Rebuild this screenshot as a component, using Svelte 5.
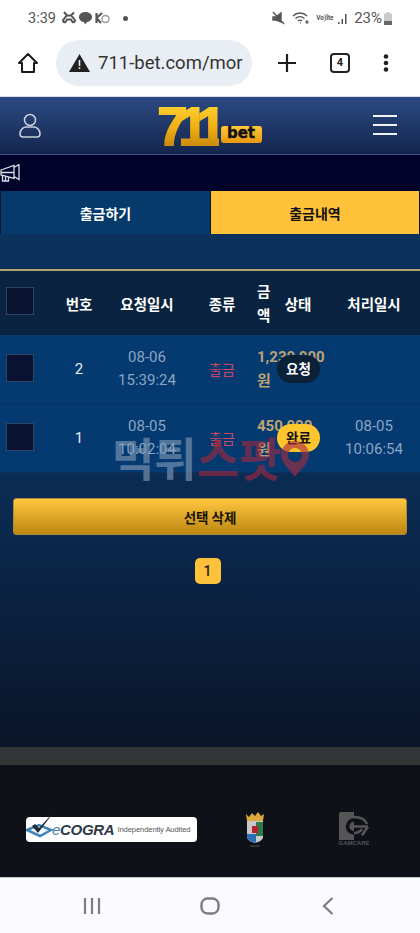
<script>
  const rows = [
    { no: 2, date: "08-06", time: "15:39:24", amount: "1,230,000", status: "요청", done: false, doneDate: "", doneTime: "" },
    { no: 1, date: "08-05", time: "10:02:04", amount: "450,000", status: "완료", done: true, doneDate: "08-05", doneTime: "10:06:54" }
  ]
</script>

<div class="phone">
  <div class="status">
    <span class="clock">3:39</span>
    <svg class="s-ic" width="14" height="14" viewBox="0 0 14 14"><path d="M2 1l3 3.500h4L12 1.500M5 4.500C3 6 2 8 1 9.500c0 1 1 2 2.500 1.500L5 8.500h4l1.500 2.500c1.500.5 2.500-.5 2.500-1.500-1-1.500-2-3.500-4-5" fill="none" stroke="#555" stroke-width="2"/></svg>
    <svg class="s-ic" width="15" height="14" viewBox="0 0 15 14"><path d="M7.500 1C3.600 1 1 3.200 1 6s2.400 5 5 5l1 2.500L9 11c3-.4 5-2.400 5-5S11.400 1 7.500 1z" fill="#555"/></svg>
    <svg class="s-ic" width="15" height="14" viewBox="0 0 15 14"><path d="M1.500 2v10M1.500 7L7 2M1.500 7L6 12" fill="none" stroke="#555" stroke-width="2.200"/><circle cx="10.500" cy="8" r="3.500" fill="none" stroke="#999" stroke-width="1.400"/></svg>
    <span class="dot"></span>
    <span class="grow"></span>
    <svg class="s-ic" width="13" height="14" viewBox="0 0 13 14"><path d="M1 6h3l5-4v9L4 9H1zM1 1l11 12" fill="#555" stroke="#555" stroke-width="1.400"/></svg>
    <svg class="wifi" width="18" height="14" viewBox="0 0 18 14"><path d="M1 5c4-4 10-4 14 0M3.500 7.500c2.500-2.500 6.500-2.500 9 0M6 10c1-1 3-1 4 0" fill="none" stroke="#555" stroke-width="1.300"/><path d="M8 12h1M13 11h4M15 9v4" stroke="#555" stroke-width="1.200"/></svg>
    <span class="lte">Vo)lte</span>
    <svg class="signal" width="12" height="12" viewBox="0 0 12 12"><path d="M1 10h1.500v2H1zM4.500 7H6v5H4.500zM8 2h1.500v10H8z" fill="#555"/></svg>
    <span class="batt-text">23%</span>
    <svg width="8" height="13" viewBox="0 0 8 13"><path d="M2.500 0h3v1.500H8V13H0V1.500h2.500z" fill="#c9c9c9"/><path d="M0 9h8v4H0z" fill="#666"/></svg>
  </div>

  <div class="chrome">
    <svg class="home" width="22" height="22" viewBox="0 0 22 22"><path d="M11 2L2 11h3v9h12v-9h3z" fill="none" stroke="#1c1c1c" stroke-width="2" stroke-linejoin="round"/></svg>
    <div class="url">
      <svg width="21" height="18" viewBox="0 0 21 18"><path d="M10.500 0L21 18H0z" fill="#222"/><path d="M9.700 6h1.600v6H9.700zM9.700 13.200h1.600v1.800H9.700z" fill="#e8eef4"/></svg>
      <span class="url-text">711-bet.com/mor</span>
    </div>
    <svg class="plus" width="20" height="20" viewBox="0 0 20 20"><path d="M10 1v18M1 10h18" stroke="#1c1c1c" stroke-width="2.200"/></svg>
    <div class="tabs-count">4</div>
    <svg class="more" width="6" height="18" viewBox="0 0 6 18"><circle cx="3" cy="2.500" r="2.300" fill="#222"/><circle cx="3" cy="9" r="2.300" fill="#222"/><circle cx="3" cy="15.500" r="2.300" fill="#222"/></svg>
  </div>

  <header class="top">
    <svg width="22" height="25" viewBox="0 0 22 25"><circle cx="11" cy="7" r="5.500" fill="none" stroke="#c8d0dc" stroke-width="1.500"/><path d="M1 21c0-5 4-7 6-7h8c2 0 6 2 6 7 0 2-1 3-3 3H4c-2 0-3-1-3-3z" fill="none" stroke="#c8d0dc" stroke-width="1.500"/></svg>
    <div class="logo">
      <span class="digits">711</span>
      <span class="bet">bet</span>
    </div>
    <div class="burger"><i></i><i></i><i></i></div>
  </header>

  <div class="notice">
    <svg width="21" height="18" viewBox="0 0 21 18"><path d="M1 6l13-4.500v13L1 11zM14 3.500l5-3v15l-5-3M2.500 11v6h6v-4.500M5.500 11.500V17M1 8.500h13" fill="none" stroke="#d8dce4" stroke-width="1.300"/></svg>
  </div>

  <main class="content">
    <div class="tabs">
      <div class="tab">출금하기</div>
      <div class="tab on">출금내역</div>
    </div>

    <div class="list">
      <div class="line head">
        <div class="cell"><span class="box"></span></div>
        <div class="cell">번호</div>
        <div class="cell">요청일시</div>
        <div class="cell">종류</div>
        <div class="cell amount-head">금액</div>
        <div class="cell">상태</div>
        <div class="cell last">처리일시</div>
      </div>
      {#each rows as r}
        <div class="line row">
          <div class="cell"><span class="box"></span></div>
          <div class="cell no">{r.no}</div>
          <div class="cell muted">{r.date}<br />{r.time}</div>
          <div class="cell red">출금</div>
          <div class="cell amount">{r.amount} 원</div>
          <div class="cell"><span class="badge" class:done={r.done}>{r.status}</span></div>
          <div class="cell muted last">{r.doneDate}<br />{r.doneTime}</div>
        </div>
      {/each}
    </div>

    <button class="del">선택 삭제</button>
    <div class="pager"><span class="page">1</span></div>

    <div class="mark">
      <span class="m1">먹튀</span><span class="m2">스팟</span>
      <svg width="28" height="36" viewBox="0 0 28 36"><path fill-rule="evenodd" d="M14 0a14 14 0 0 1 14 14c0 8-9 15-14 22C9 29 0 22 0 14A14 14 0 0 1 14 0zm0 7a7 7 0 1 0 0 14 7 7 0 0 0 0-14z" fill="#a82c40" opacity=".62"/></svg>
    </div>
  </main>

  <div class="greybar"></div>

  <footer class="foot">
    <div class="ecogra">
      <svg width="30" height="28" viewBox="0 0 30 28"><path d="M1 19l12-5 12 5-11 6z" fill="none" stroke="#3f86b8" stroke-width="2.500"/><path d="M6 15l6 7L28 1l-15 16-4-4z" fill="#1e2c3c"/></svg>
      <span class="eco"><b>e</b>COGRA</span>
      <span class="audit">Independently Audited</span>
    </div>
    <svg class="crest" width="20" height="36" viewBox="0 0 20 36"><path d="M1 3l3 3 3-4 3 3 3-4 3 4 3-2-1 7H2z" fill="#d9a93a"/><path d="M2 10h16v16c0 3-4 5-8 6-4-1-8-3-8-6z" fill="#c8c8c8"/><path d="M11 11h7v14h-7z" fill="#2f7a46"/><path d="M2 23h9v9c-4-1-9-3-9-6z" fill="#2b6cb5"/><path d="M7 15h6v7H7z" fill="#b5232a"/><path d="M5 35h10" stroke="#555"/></svg>
    <div class="gamcare">
      <svg width="32" height="28" viewBox="0 0 32 28"><path d="M1 2q0-2 2-2h13v28H1z" fill="#555"/><path d="M16 8a6.500 6.500 0 0 0 0 13" fill="none" stroke="#0e1118" stroke-width="3.500"/><path d="M16 5c6 0 11 2 13 7M14 14.500h16M30 14.500l-6 9M16 21c3 0 6-1 8-4" fill="none" stroke="#555" stroke-width="2.600"/></svg>
      <span class="gc">GAMCARE</span>
    </div>
  </footer>

  <nav class="sysnav">
    <svg width="18" height="18" viewBox="0 0 18 18"><path d="M2 1v16M9 1v16M16 1v16" stroke="#7d7d7f" stroke-width="2.200"/></svg>
    <svg width="20" height="18" viewBox="0 0 20 18"><rect x="1.500" y="1.500" width="17" height="15" rx="6" fill="none" stroke="#7d7d7f" stroke-width="2.400"/></svg>
    <svg width="12" height="18" viewBox="0 0 12 18"><path d="M10.500 1L2 9l8.500 8" fill="none" stroke="#7d7d7f" stroke-width="2.200"/></svg>
  </nav>
</div>

<style>
  :global(body) {
    margin: 0;
    overflow: hidden;
  }
  .phone {
    width: 420px;
    height: 933px;
    display: flex;
    flex-direction: column;
    font-family: "Noto Sans CJK KR", Roboto, sans-serif;
    background: #fff;
  }

  .status {
    height: 33px;
    padding: 3px 28px 0 28px;
    box-sizing: border-box;
    display: flex;
    align-items: center;
    font-family: Roboto, sans-serif;
    color: #555;
  }
  .clock { font-size: 14.500px; margin-right: 6px; }
  .s-ic { margin-right: 2px; }
  .dot { width: 5px; height: 5px; border-radius: 50%; background: #555; margin-left: 11px; }
  .grow { flex: 1; }
  .wifi { margin-left: 5px; }
  .lte { font-size: 6.500px; font-weight: 700; margin-left: 6px; width: 19px; white-space: nowrap; }
  .signal { margin-left: 2px; }
  .batt-text { font-size: 15px; margin: 0 2px 0 5px; }

  .chrome {
    height: 64px;
    padding-bottom: 3px;
    box-sizing: border-box;
    display: flex;
    align-items: center;
    border-bottom: 1px solid #d8dde6;
  }
  .home { margin-left: 17px; }
  .url {
    width: 196px;
    height: 46px;
    margin-left: 17px;
    border-radius: 23px;
    background: #e8eef4;
    display: flex;
    align-items: center;
    gap: 8px;
    padding-left: 13px;
    box-sizing: border-box;
  }
  .url-text { font-family: Roboto, sans-serif; font-size: 18.500px; color: #333; white-space: nowrap; }
  .plus { margin-left: 25px; }
  .tabs-count {
    width: 20px;
    height: 20px;
    margin-left: 33px;
    border: 2px solid #222;
    border-radius: 4px;
    box-sizing: border-box;
    font: 700 11px/16px Roboto, sans-serif;
    text-align: center;
    color: #222;
  }
  .more { margin-left: 33px; }

  .top {
    height: 58px;
    padding: 0 23px 0 19px;
    box-sizing: border-box;
    display: flex;
    align-items: center;
    justify-content: space-between;
    background: linear-gradient(#2b4a82, #14264f);
    border-bottom: 1px solid #3c5482;
  }
  .logo {
    display: flex;
    align-items: flex-end;
    width: 104px;
    height: 40px;
    margin-left: 5px;
    gap: 2px;
  }
  .digits {
    font: 700 54px/40px "Liberation Sans", sans-serif;
    letter-spacing: -9px;
    width: 61px;
    background: linear-gradient(#ffcf30, #f0ae12 55%, #c98a10);
    -webkit-background-clip: text;
    background-clip: text;
    color: transparent;
    -webkit-text-stroke: 2px transparent;
  }
  .bet {
    width: 41px;
    height: 17px;
    border-radius: 3px;
    background: linear-gradient(#ffc83a, #e8980f);
    color: #111;
    font: 700 15px/15px "DejaVu Sans", sans-serif;
    -webkit-text-stroke: 0.4px #111;
    text-align: center;
    margin-bottom: 3px;
  }
  .burger { display: flex; flex-direction: column; gap: 7px; margin-top: -1px; }
  .burger i { display: block; width: 24px; height: 2px; background: #f0f2f6; }

  .notice {
    height: 36px;
    background: #02032a;
    display: flex;
    align-items: center;
  }

  .content {
    flex: 1;
    position: relative;
    background: linear-gradient(#0b335f, #0b2b52 55%, #0a1528);
  }
  .tabs {
    display: grid;
    grid-template-columns: 209px 208px;
    gap: 1px;
    padding: 0 1px;
    height: 43px;
    background: #081a30;
  }
  .tab {
    background: #063a6b;
    color: #fff;
    font-size: 14px;
    font-weight: 700;
    display: flex;
    align-items: center;
    justify-content: center;
  }
  .tab.on { background: #ffc03a; color: #111; }

  .list {
    margin-top: 35px;
    border-top: 2px solid #b3a36c;
  }
  .line {
    display: grid;
    grid-template-columns: 53px 52px 84px 66px 22px 42px 101px;
    align-items: center;
  }
  .cell {
    text-align: center;
    min-width: 0;
  }
  .box {
    display: block;
    width: 28px;
    height: 28px;
    margin: -2px 0 0 6px;
    box-sizing: border-box;
    background: #0a1430;
    border: 1px solid #2c4566;
  }
  .head {
    height: 64px;
    background: #0a2340;
    color: #fff;
    font-size: 14.500px;
    font-weight: 700;
  }
  .head .box { margin-top: -4px; }
  .amount-head {
    line-height: 24px;
    text-align: left;
    padding-left: 2px;
    word-break: break-all;
  }
  .last { padding-left: 9px; }
  .row {
    height: 69px;
    background: #053a70;
    border-bottom: 1px solid #0a3260;
    box-sizing: border-box;
    font-family: Roboto, "Noto Sans CJK KR", sans-serif;
    font-size: 15px;
    line-height: 23px;
  }
  .no { color: #e6ebf2; }
  .muted { color: #8aa5c4; }
  .red { color: #cc4866; font-family: "Noto Sans CJK KR", sans-serif; font-size: 14px; }
  .amount {
    color: #bca273;
    font-weight: 700;
    text-align: left;
    padding-left: 2px;
    line-height: 24px;
  }
  .badge {
    display: block;
    width: 43px;
    height: 28px;
    border-radius: 14px;
    background: #0a2138;
    color: #fff;
    font: 700 13.500px/27px "Noto Sans CJK KR", sans-serif;
  }
  .badge.done { background: #ffc52e; color: #111; }

  .del {
    display: block;
    width: 394px;
    height: 37px;
    margin: 25px 0 0 13px;
    padding: 0;
    border: 1px solid #a88c3c;
    border-radius: 3px;
    background: linear-gradient(#ffc63f, #bd8712);
    color: #1a1408;
    font: 700 13.500px "Noto Sans CJK KR", sans-serif;
  }
  .pager {
    display: flex;
    justify-content: center;
    margin-top: 23px;
    padding-right: 5px;
  }
  .page {
    width: 26px;
    height: 26px;
    border-radius: 5px;
    background: #ffc03a;
    color: #222;
    font: 500 14px/26px Roboto, sans-serif;
    text-align: center;
  }

  .mark {
    position: absolute;
    left: 112px;
    top: 242px;
    display: flex;
    align-items: center;
    font-size: 46px;
    font-weight: 700;
    line-height: 46px;
    white-space: nowrap;
  }
  .m1 { color: rgba(135, 160, 185, 0.6); }
  .m2 { color: rgba(170, 40, 62, 0.62); }
  .mark svg { margin-top: 5px; }

  .greybar { height: 18px; background: #333436; }
  .foot {
    height: 112px;
    background: #0e1118;
    display: flex;
    align-items: center;
    padding-left: 26px;
    box-sizing: border-box;
  }
  .ecogra {
    width: 171px;
    height: 25px;
    margin-top: 16px;
    border-radius: 4px;
    background: #fff;
    display: flex;
    align-items: center;
    position: relative;
    padding-left: 26px;
    box-sizing: border-box;
    white-space: nowrap;
  }
  .ecogra svg { position: absolute; left: 0; top: -6px; }
  .eco {
    font: italic 700 15px "Liberation Sans", sans-serif;
    color: #2d3a4a;
    letter-spacing: -0.3px;
  }
  .eco b { color: #3f7fae; font-weight: 400; }
  .audit {
    font: 7.600px "Liberation Sans", sans-serif;
    color: #555;
    margin-left: 3px;
    letter-spacing: -0.1px;
  }
  .crest { margin-left: 48px; margin-top: 16px; }
  .gamcare {
    margin-left: 73px;
    margin-top: 16px;
    display: flex;
    flex-direction: column;
    align-items: center;
    width: 32px;
  }
  .gc { font: 700 6px/7px "Liberation Sans", sans-serif; color: #555; }

  .sysnav {
    height: 56px;
    background: #fbfbfd;
    border-top: 1px solid #c8c8cc;
    box-sizing: border-box;
    display: grid;
    grid-template-columns: 184px 51px 185px;
    align-items: center;
    justify-items: center;
  }
</style>
